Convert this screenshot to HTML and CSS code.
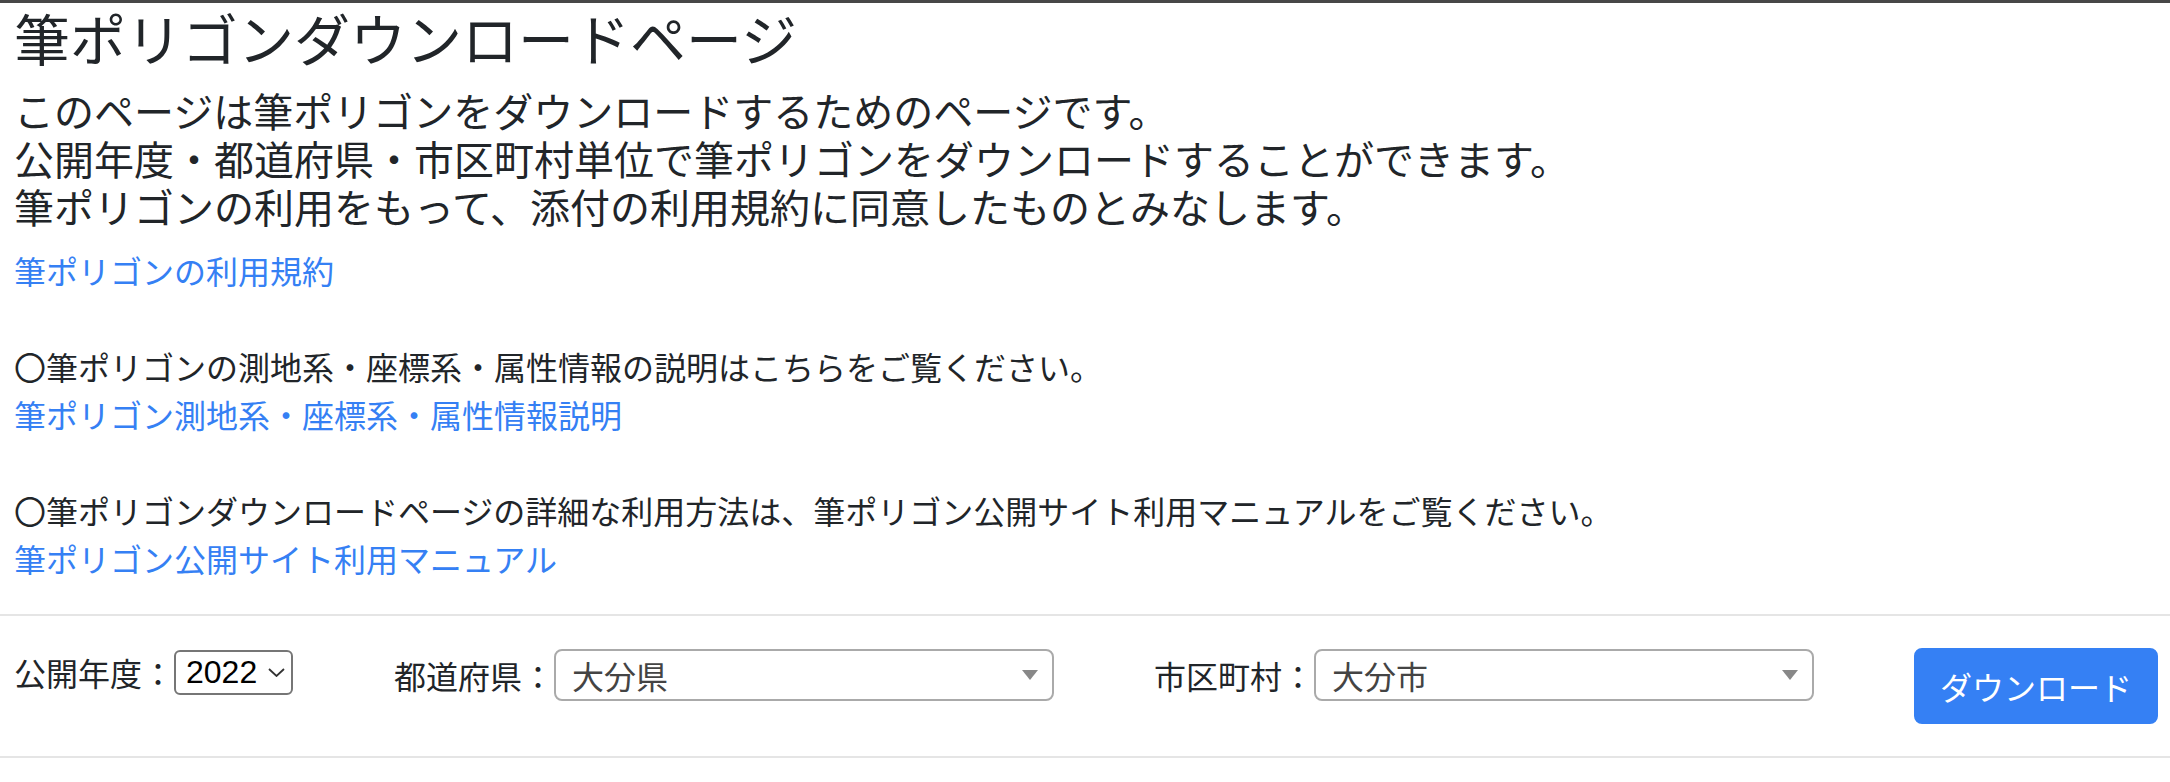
FILE: index.html
```html
<!DOCTYPE html>
<html lang="ja">
<head>
<meta charset="utf-8">
<title>筆ポリゴンダウンロードページ</title>
<link rel="stylesheet" href="styles.css">
</head>
<body>
  <section class="intro-section">
    <h3 class="page-title">筆ポリゴンダウンロードページ</h3>
    <h5 class="lead-text">このページは筆ポリゴンをダウンロードするためのページです。<br>公開年度・都道府県・市区町村単位で筆ポリゴンをダウンロードすることができます。<br>筆ポリゴンの利用をもって、添付の利用規約に同意したものとみなします。</h5>
    <p class="info-text">
      <a href="#" class="doc-link">筆ポリゴンの利用規約</a><br><br>
      〇筆ポリゴンの測地系・座標系・属性情報の説明はこちらをご覧ください。<br>
      <a href="#" class="doc-link">筆ポリゴン測地系・座標系・属性情報説明</a><br><br>
      〇筆ポリゴンダウンロードページの詳細な利用方法は、筆ポリゴン公開サイト利用マニュアルをご覧ください。<br>
      <a href="#" class="doc-link">筆ポリゴン公開サイト利用マニュアル</a>
    </p>
  </section>
  <hr class="divider">
  <form class="download-form" onsubmit="return false;">
    <div class="field field-year">
      <label class="field-label" for="year">公開年度：</label>
      <span class="native-select">
        <select id="year" class="year-select">
          <option>2022</option>
        </select>
        <svg class="chevron" viewBox="0 0 17 9" width="17" height="9" aria-hidden="true"><polyline points="1,1 8.5,8 16,1" fill="none" stroke="#333" stroke-width="1.8"/></svg>
      </span>
    </div>
    <div class="field field-pref">
      <label class="field-label" for="pref">都道府県：</label>
      <span class="combo">
        <select id="pref" class="combo-select">
          <option>大分県</option>
        </select>
        <svg class="combo-arrow" viewBox="0 0 16 10" width="16" height="10" aria-hidden="true"><polygon points="0,0 16,0 8,10" fill="#888"/></svg>
      </span>
    </div>
    <div class="field field-city">
      <label class="field-label" for="city">市区町村：</label>
      <span class="combo">
        <select id="city" class="combo-select">
          <option>大分市</option>
        </select>
        <svg class="combo-arrow" viewBox="0 0 16 10" width="16" height="10" aria-hidden="true"><polygon points="0,0 16,0 8,10" fill="#888"/></svg>
      </span>
    </div>
    <div class="field field-action">
      <button type="button" class="btn-download">ダウンロード</button>
    </div>
  </form>
  <hr class="divider">
</body>
</html>
```
FILE: styles.css
```css
html, body {
  margin: 0;
  padding: 0;
  background: #ffffff;
}

body {
  border-top: 3px solid #474747;
  font-family: "Noto Sans CJK JP", "Noto Sans", sans-serif;
  font-size: 32px;
  line-height: 1.5;
  color: #212529;
}

.intro-section {
  padding: 0 14px;
}

.page-title {
  margin: 0 0 16px;
  font-size: 56px;
  line-height: 1.2;
  font-weight: 400;
  color: #212529;
}

.lead-text {
  margin: 0 0 16px;
  font-size: 40px;
  line-height: 1.2;
  font-weight: 400;
  color: #212529;
}

.info-text {
  margin: 0 0 32px;
  font-size: 32px;
  line-height: 48px;
}

.doc-link {
  color: #3580f4;
  text-decoration: none;
}

.divider {
  margin: 32px 0;
  border: 0;
  border-top: 2px solid #e5e5e5;
  height: 0;
}

.download-form {
  display: grid;
  grid-template-columns: 380px 760px 760px 244px;
  align-items: start;
  padding: 0 14px;
  height: 76px;
}

.field {
  display: flex;
  align-items: center;
}

.field-year {
  height: 48px;
}

.field-pref,
.field-city {
  height: 54px;
}

.field-label {
  font-size: 32px;
  line-height: 48px;
  color: #212529;
  white-space: nowrap;
}

.native-select {
  position: relative;
  display: inline-flex;
}

.year-select {
  appearance: none;
  -webkit-appearance: none;
  width: 119px;
  height: 45px;
  margin: 0;
  padding: 0 30px 0 10px;
  border: 2px solid #767676;
  border-radius: 6px;
  background: #ffffff;
  font-family: "Liberation Sans", Arial, sans-serif;
  font-size: 32px;
  color: #000000;
}

.chevron {
  position: absolute;
  right: 8px;
  top: 18px;
  pointer-events: none;
}

.combo {
  position: relative;
  display: inline-flex;
}

.combo-select {
  appearance: none;
  -webkit-appearance: none;
  width: 500px;
  height: 52px;
  margin: 0;
  padding: 0 40px 0 16px;
  border: 2px solid #aaaaaa;
  border-radius: 8px;
  background: #ffffff;
  font-family: "Noto Sans CJK JP", sans-serif;
  font-size: 32px;
  color: #444444;
}

.combo-arrow {
  position: absolute;
  right: 16px;
  top: 21px;
  pointer-events: none;
}

.btn-download {
  width: 244px;
  height: 76px;
  margin: 0;
  padding: 12px 24px;
  border: 2px solid #3580f4;
  border-radius: 8px;
  background: #3580f4;
  color: #ffffff;
  font-family: "Noto Sans CJK JP", sans-serif;
  font-size: 32px;
  line-height: 48px;
  cursor: pointer;
}
```
